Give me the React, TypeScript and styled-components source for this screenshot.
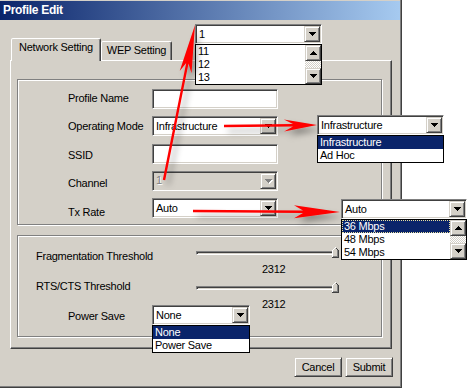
import React from 'react';
import styled, { createGlobalStyle, css } from 'styled-components';

const face = '#d4d0c8';
const shade = '#808080';
const dark = '#404040';
const navy = '#0a246a';

const GlobalStyle = createGlobalStyle`
  html, body {
    margin: 0;
    padding: 0;
    background: #fff;
  }
  body {
    font-family: "Liberation Sans", Arial, sans-serif;
    font-size: 11px;
    letter-spacing: -0.25px;
    color: #000;
  }
`;

const sunken = css`
  box-sizing: border-box;
  border: 1px solid;
  border-color: ${shade} #fff #fff ${shade};
  box-shadow: inset 1px 1px 0 ${dark}, inset -1px -1px 0 ${face};
`;

const raised = css`
  box-sizing: border-box;
  border: 1px solid;
  border-color: ${face} ${dark} ${dark} ${face};
  box-shadow: inset 1px 1px 0 #fff, inset -1px -1px 0 ${shade};
  background: ${face};
`;

const Page = styled.div`
  position: relative;
  width: 468px;
  height: 388px;
  overflow: hidden;
  background: #fff;
`;

const Window = styled.div`
  box-sizing: border-box;
  width: 402px;
  height: 388px;
  padding-top: 1px;
  background: ${face};
  box-shadow: inset -1px -1px 0 ${dark}, inset -2px -2px 0 ${shade};
`;

const TitleBar = styled.div`
  height: 19px;
  margin-right: 2px;
  padding-left: 3px;
  background: linear-gradient(to right, ${navy}, #a6caf0);
  color: #fff;
  font-size: 12px;
  font-weight: bold;
  letter-spacing: -0.3px;
  line-height: 19px;
`;

const Body = styled.div`
  padding: 18px 9px 0 10px;
`;

const TabStrip = styled.div`
  display: flex;
  align-items: flex-end;
  height: 22px;
  padding-left: 1px;
`;

const Tab = styled.div<{ $active?: boolean }>`
  position: relative;
  box-sizing: border-box;
  width: ${p => (p.$active ? 90 : 71)}px;
  height: ${p => (p.$active ? 23 : 19)}px;
  margin-bottom: ${p => (p.$active ? -1 : 0)}px;
  padding-top: 2px;
  z-index: ${p => (p.$active ? 1 : 0)};
  background: ${face};
  border: 1px solid;
  border-bottom: none;
  border-color: #fff ${dark} transparent #fff;
  border-radius: 2px 2px 0 0;
  box-shadow: inset -1px 0 0 ${shade};
  text-align: center;
  line-height: 13px;
`;

const Panel = styled.div`
  box-sizing: border-box;
  width: 382px;
  height: 289px;
  padding: 18px 0 0 6px;
  border: 1px solid;
  border-color: #fff ${dark} ${dark} #fff;
  box-shadow: inset -1px -1px 0 ${shade};
`;

const Group = styled.div<{ $h: number; $gap?: number }>`
  box-sizing: border-box;
  width: 365px;
  height: ${p => p.$h}px;
  margin-top: ${p => p.$gap ?? 0}px;
  border: 1px solid ${shade};
  box-shadow: 1px 1px 0 #fff, inset 1px 1px 0 #fff;
  display: grid;
`;

const FormGrid = styled(Group)`
  grid-template-columns: 84px 126px;
  padding-left: 50px;
`;

const ThresholdGrid = styled(Group)`
  grid-template-columns: 134px 1fr;
`;

const LabelColumn = styled.div<{ $top: number; $gap: number }>`
  display: flex;
  flex-direction: column;
  padding-top: ${p => p.$top}px;
  gap: ${p => p.$gap}px;
`;

const FieldColumn = styled.div<{ $top: number; $gap: number }>`
  display: flex;
  flex-direction: column;
  align-items: flex-start;
  padding-top: ${p => p.$top}px;
  gap: ${p => p.$gap}px;
`;

const Label = styled.div<{ $indent?: number }>`
  padding-left: ${p => p.$indent ?? 0}px;
  line-height: 13px;
  white-space: nowrap;
`;

const TextBox = styled.div`
  ${sunken};
  width: 126px;
  height: 20px;
  background: #fff;
`;

const SelectBox = styled.div<{ $w: number; $disabled?: boolean }>`
  ${sunken};
  position: relative;
  display: flex;
  align-items: center;
  width: ${p => p.$w}px;
  height: 20px;
  padding: 1px;
  background: ${p => (p.$disabled ? face : '#fff')};
  color: ${p => (p.$disabled ? shade : '#000')};
  text-shadow: ${p => (p.$disabled ? '1px 1px 0 #fff' : 'none')};
`;

const SelectValue = styled.span`
  flex: 1;
  padding-left: 2px;
  line-height: 13px;
  white-space: nowrap;
`;

const ArrowButton = styled.div<{ $disabled?: boolean }>`
  ${raised};
  width: 16px;
  height: 16px;
  display: flex;
  align-items: center;
  justify-content: center;
  svg {
    fill: ${p => (p.$disabled ? shade : '#000')};
    filter: ${p => (p.$disabled ? 'drop-shadow(1px 1px 0 #fff)' : 'none')};
  }
`;

const Slider = styled.div`
  position: relative;
  display: flex;
  align-items: center;
  width: 143px;
  height: 11px;
  margin-left: 44px;
`;

const SliderTrack = styled.div`
  box-sizing: border-box;
  width: 141px;
  height: 4px;
  border: 1px solid;
  border-color: ${shade} #fff #fff ${shade};
  box-shadow: inset 1px 1px 0 ${dark};
  background: ${face};
`;

const SliderThumb = styled.svg`
  position: absolute;
  right: 0;
  top: 0;
`;

const SliderBlock = styled.div<{ $gap?: number }>`
  display: flex;
  flex-direction: column;
  margin-top: ${p => p.$gap ?? 0}px;
`;

const SliderValue = styled.div`
  margin: 5px 0 0 110px;
  line-height: 13px;
`;

const PowerSaveWrap = styled.div`
  position: relative;
  margin-top: -6px;
`;

const ButtonRow = styled.div`
  display: flex;
  justify-content: flex-end;
  gap: 3px;
  margin-top: 8px;
`;

const PushButton = styled.div`
  ${raised};
  width: 48px;
  height: 20px;
  line-height: 18px;
  text-align: center;
`;

const Callout = styled.div<{ $x: number; $y: number }>`
  position: absolute;
  left: ${p => p.$x}px;
  top: ${p => p.$y}px;
`;

const DropList = styled.div<{ $w: number; $floating?: boolean }>`
  box-sizing: border-box;
  display: flex;
  width: ${p => p.$w}px;
  border: 1px solid #000;
  background: #fff;
  ${p =>
    p.$floating &&
    css`
      position: absolute;
      left: 0;
      top: 100%;
      z-index: 2;
    `}
`;

const Items = styled.div`
  flex: 1;
  display: flex;
  flex-direction: column;
`;

const Item = styled.div<{ $selected?: boolean; $focused?: boolean }>`
  height: 13px;
  line-height: 13px;
  padding-left: 2px;
  white-space: nowrap;
  background: ${p => (p.$selected ? navy : 'transparent')};
  color: ${p => (p.$selected ? '#fff' : '#000')};
  outline: ${p => (p.$focused ? '1px dotted #e8e0a0' : 'none')};
  outline-offset: -1px;
`;

const ScrollBar = styled.div`
  display: flex;
  flex-direction: column;
  width: 16px;
`;

const ScrollButton = styled(ArrowButton)`
  height: 16px;
`;

const ScrollTrack = styled.div`
  flex: 1;
  background: repeating-conic-gradient(#fff 0 25%, ${face} 0 50%) 0 0 / 2px 2px;
`;

const ArrowLayer = styled.svg`
  position: absolute;
  left: 0;
  top: 0;
  pointer-events: none;
`;

const DownGlyph = () => (
  <svg width="7" height="4" viewBox="0 0 7 4" shapeRendering="crispEdges">
    <path d="M0 0H7V1H6V2H5V3H4V4H3V3H2V2H1V1H0Z" />
  </svg>
);

const UpGlyph = () => (
  <svg width="7" height="4" viewBox="0 0 7 4" shapeRendering="crispEdges">
    <path d="M3 0H4V1H5V2H6V3H7V4H0V3H1V2H2V1H3Z" />
  </svg>
);

const Select = ({ value, width, disabled }: { value: string; width: number; disabled?: boolean }) => (
  <SelectBox $w={width} $disabled={disabled}>
    <SelectValue>{value}</SelectValue>
    <ArrowButton $disabled={disabled}>
      <DownGlyph />
    </ArrowButton>
  </SelectBox>
);

interface ListProps {
  width: number;
  items: string[];
  selected?: number;
  focused?: boolean;
  scroll?: boolean;
  floating?: boolean;
}

const OptionList = ({ width, items, selected, focused, scroll, floating }: ListProps) => (
  <DropList $w={width} $floating={floating}>
    <Items>
      {items.map((it, i) => (
        <Item key={it} $selected={i === selected} $focused={focused && i === selected}>
          {it}
        </Item>
      ))}
    </Items>
    {scroll && (
      <ScrollBar>
        <ScrollButton>
          <UpGlyph />
        </ScrollButton>
        <ScrollTrack />
        <ScrollButton>
          <DownGlyph />
        </ScrollButton>
      </ScrollBar>
    )}
  </DropList>
);

const ThresholdSlider = ({ value, gap }: { value: string; gap?: number }) => (
  <SliderBlock $gap={gap}>
    <Slider>
      <SliderTrack />
      <SliderThumb width="7" height="11" viewBox="0 0 7 11" shapeRendering="crispEdges">
        <path d="M0 3L3 0L6 3V10H0Z" fill={face} />
        <path d="M0 10V3H1V2H2V1H3V0H4V1H3V2H2V3H1V10Z" fill="#fff" />
        <path d="M4 1H5V2H6V3H7V11H0V10H6V3H5V2H4Z" fill={dark} />
        <path d="M5 3H6V10H1V9H5Z" fill={shade} />
      </SliderThumb>
    </Slider>
    <SliderValue>{value}</SliderValue>
  </SliderBlock>
);

// red callout arrow with a stealth head
const arrowPath = (x1: number, y1: number, x2: number, y2: number, head: number, half: number) => {
  const len = Math.hypot(x2 - x1, y2 - y1);
  const ux = (x2 - x1) / len;
  const uy = (y2 - y1) / len;
  const px = -uy;
  const py = ux;
  const sw = 1.2;
  const bx = x2 - ux * head;
  const by = y2 - uy * head;
  const nx = x2 - ux * (head - 9);
  const ny = y2 - uy * (head - 9);
  const pts = [
    [x1 + px * sw, y1 + py * sw],
    [nx + px * sw, ny + py * sw],
    [bx + px * half, by + py * half],
    [x2, y2],
    [bx - px * half, by - py * half],
    [nx - px * sw, ny - py * sw],
    [x1 - px * sw, y1 - py * sw],
  ];
  return 'M' + pts.map(p => p.map(v => v.toFixed(1)).join(' ')).join('L') + 'Z';
};

export default function App() {
  return (
    <Page>
      <GlobalStyle />
      <Window>
        <TitleBar>Profile Edit</TitleBar>
        <Body>
          <TabStrip>
            <Tab $active>Network Setting</Tab>
            <Tab>WEP Setting</Tab>
          </TabStrip>
          <Panel>
            <FormGrid $h={146}>
              <LabelColumn $top={12} $gap={15.4}>
                <Label>Profile Name</Label>
                <Label>Operating Mode</Label>
                <Label>SSID</Label>
                <Label>Channel</Label>
                <Label>Tx Rate</Label>
              </LabelColumn>
              <FieldColumn $top={9} $gap={7.25}>
                <TextBox />
                <Select value="Infrastructure" width={126} />
                <TextBox />
                <Select value="1" width={126} disabled />
                <Select value="Auto" width={126} />
              </FieldColumn>
            </FormGrid>
            <ThresholdGrid $h={102} $gap={10}>
              <LabelColumn $top={14} $gap={17}>
                <Label $indent={18}>Fragmentation Threshold</Label>
                <Label $indent={18}>RTS/CTS Threshold</Label>
                <Label $indent={50}>Power Save</Label>
              </LabelColumn>
              <FieldColumn $top={11} $gap={0}>
                <ThresholdSlider value="2312" />
                <ThresholdSlider value="2312" gap={6} />
                <PowerSaveWrap>
                  <Select value="None" width={98} />
                  <OptionList width={98} items={['None', 'Power Save']} selected={0} floating />
                </PowerSaveWrap>
              </FieldColumn>
            </ThresholdGrid>
          </Panel>
          <ButtonRow>
            <PushButton>Cancel</PushButton>
            <PushButton>Submit</PushButton>
          </ButtonRow>
        </Body>
      </Window>

      <Callout $x={195} $y={24}>
        <Select value="1" width={127} />
        <OptionList width={127} items={['11', '12', '13']} scroll />
      </Callout>
      <Callout $x={317} $y={115}>
        <Select value="Infrastructure" width={127} />
        <OptionList width={127} items={['Infrastructure', 'Ad Hoc']} selected={0} />
      </Callout>
      <Callout $x={341} $y={199}>
        <Select value="Auto" width={126} />
        <OptionList width={126} items={['36 Mbps', '48 Mbps', '54 Mbps']} selected={0} focused scroll />
      </Callout>

      <ArrowLayer width="468" height="388" viewBox="0 0 468 388">
        <defs>
          <filter id="arrowShadow" x="-20%" y="-50%" width="140%" height="200%">
            <feDropShadow dx="4" dy="5" stdDeviation="3" floodColor="#000" floodOpacity="0.35" />
          </filter>
        </defs>
        <g fill="#ff0000" filter="url(#arrowShadow)">
          <path d={arrowPath(164, 180, 195, 25, 48, 6)} />
          <path d={arrowPath(224, 126, 317, 125, 33, 6)} />
          <path d={arrowPath(193, 211, 340, 212, 46, 6.5)} />
        </g>
      </ArrowLayer>
    </Page>
  );
}
